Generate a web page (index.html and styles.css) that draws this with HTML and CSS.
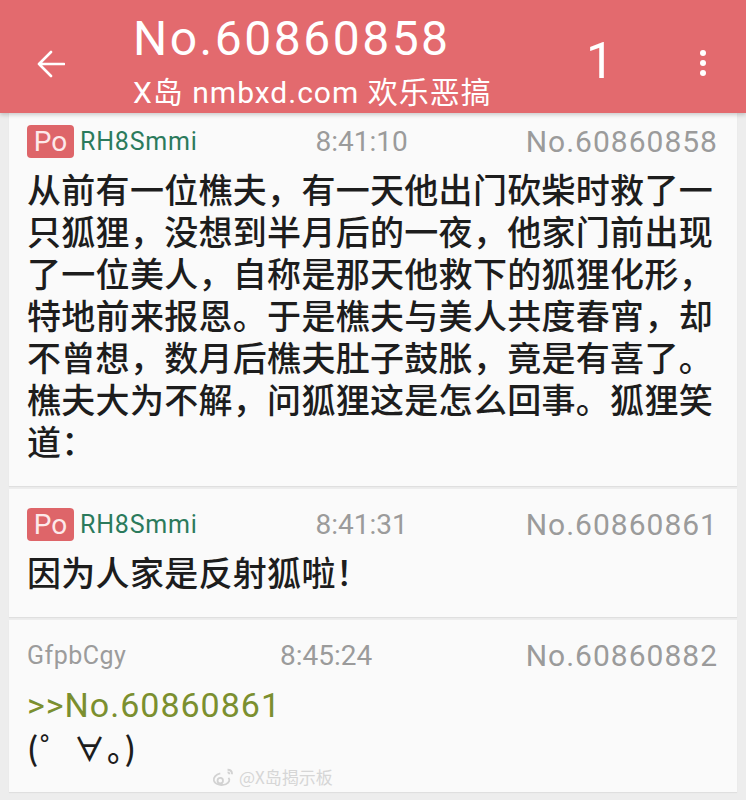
FILE: index.html
```html
<!DOCTYPE html>
<html lang="zh-CN">
<head>
  <meta charset="UTF-8" />
  <meta name="viewport" content="width=device-width, initial-scale=1.0" />
  <title>No.60860858</title>
  <link rel="stylesheet" href="styles.css">
</head>
<body>
  <header class="topbar">
    <span class="back">
      <svg width="28" height="28" viewBox="0 0 28 28" fill="none" stroke="#fff" stroke-width="2.6" stroke-linecap="round" stroke-linejoin="round">
        <path d="M27 14H2M14 2L2 14l12 12"/>
      </svg>
    </span>
    <div class="title-block">
      <div class="title">No.60860858</div>
      <div class="subtitle">X岛 nmbxd.com 欢乐恶搞</div>
    </div>
    <span class="page-num">1</span>
    <span class="more"><i></i><i></i><i></i></span>
  </header>

  <main class="thread">
    <!-- 主串 -->
    <section class="post">
      <div class="post-head">
        <div class="who"><span class="po">Po</span><span class="uid">RH8Smmi</span></div>
        <span class="time">8:41:10</span>
        <span class="no">No.60860858</span>
      </div>
      <p class="content">从前有一位樵夫，有一天他出门砍柴时救了一只狐狸，没想到半月后的一夜，他家门前出现了一位美人，自称是那天他救下的狐狸化形，特地前来报恩。于是樵夫与美人共度春宵，却不曾想，数月后樵夫肚子鼓胀，竟是有喜了。樵夫大为不解，问狐狸这是怎么回事。狐狸笑道：</p>
    </section>

    <section class="post">
      <div class="post-head">
        <div class="who"><span class="po">Po</span><span class="uid">RH8Smmi</span></div>
        <span class="time">8:41:31</span>
        <span class="no">No.60860861</span>
      </div>
      <p class="content">因为人家是反射狐啦！</p>
    </section>

    <section class="post last">
      <div class="post-head">
        <div class="who"><span class="uid plain">GfpbCgy</span></div>
        <span class="time">8:45:24</span>
        <span class="no">No.60860882</span>
      </div>
      <p class="content"><span class="quote">&gt;&gt;No.60860861</span><br><span class="kao">(゜∀。)</span></p>
      <div class="watermark">
        <svg width="24" height="20" viewBox="0 0 26 22" fill="none" stroke="#d2d2d2" stroke-width="2">
          <path d="M10 7C5 8 2 12 3 15c1 4 8 6 13 4 4-2 5-5 3-7"/>
          <circle cx="10" cy="15" r="3"/>
          <path d="M18 3c3 0 5 2 5 5M18 6c1 0 2 1 2 2"/>
        </svg>
        <span>@X岛揭示板</span>
      </div>
    </section>
  </main>
</body>
</html>
```

FILE: styles.css
```css
body {
  margin: 0;
  background: #ededed;
  font-family: Roboto, "Noto Sans CJK SC", sans-serif;
}

/* top bar */
.topbar {
  position: relative;
  z-index: 2;
  height: 113px;
  box-sizing: border-box;
  background: #e36a6e;
  color: #fff;
  display: flex;
  align-items: flex-start;
  padding: 0 40px 0 37px;
  box-shadow: 0 2px 4px rgba(0,0,0,0.18);
}
.back {
  width: 28px;
  height: 28px;
  margin-top: 50px;
}
.title-block {
  margin-left: 68px;
  flex: 1;
}
.title {
  font-size: 48px;
  line-height: 52px;
  letter-spacing: 2.5px;
  margin-top: 13px;
}
.subtitle {
  font-size: 30px;
  line-height: 36px;
  letter-spacing: 1px;
  margin-top: 10px;
}
.page-num {
  font-size: 50px;
  line-height: 50px;
  margin-top: 36px;
  margin-right: 86px;
}
.more {
  display: flex;
  flex-direction: column;
  gap: 4px;
  margin-top: 50px;
}
.more i {
  width: 6px;
  height: 6px;
  border-radius: 50%;
  background: #fff;
}

/* posts */
.thread {
  margin-top: -7px;
}
.post {
  position: relative;
  background: #fafafa;
  margin: 0 9px 3px;
  padding: 18px 19px 24px 18px;
  box-shadow: 0 1px 1px rgba(0,0,0,0.06);
}
.post-head {
  display: flex;
  align-items: center;
  justify-content: space-between;
  min-height: 33px;
}
.who {
  display: flex;
  align-items: center;
  gap: 6px;
}
.po {
  width: 47px;
  height: 33px;
  border-radius: 4px;
  background: #de6569;
  color: #fde9ea;
  font-size: 28px;
  line-height: 33px;
  text-align: center;
}
.uid {
  color: #2b7a5c;
  font-size: 25px;
  letter-spacing: 0.8px;
}
.uid.plain {
  color: #9c9c9c;
  font-size: 25px;
  letter-spacing: 0.5px;
}
.time {
  color: #9b9b9b;
  font-size: 28px;
}
.no {
  color: #9b9b9b;
  font-size: 30px;
  letter-spacing: 1px;
}
.content {
  margin: 9px 0 0;
  font-family: "Noto Sans CJK SC", sans-serif;
  font-weight: 500;
  font-size: 34px;
  line-height: 42px;
  letter-spacing: 0.3px;
  color: #1d1d1d;
}
.quote {
  font-family: Roboto, sans-serif;
  font-weight: 400;
  color: #7b8f2f;
  font-size: 34px;
  letter-spacing: 1px;
}
.kao {
  font-size: 32px;
  letter-spacing: 1.5px;
}

/* weibo watermark */
.watermark {
  position: absolute;
  left: 202px;
  bottom: 3px;
  display: flex;
  align-items: center;
  gap: 4px;
  color: #d6d6d6;
  font-size: 17px;
  font-family: "Noto Sans CJK SC", sans-serif;
}
```
